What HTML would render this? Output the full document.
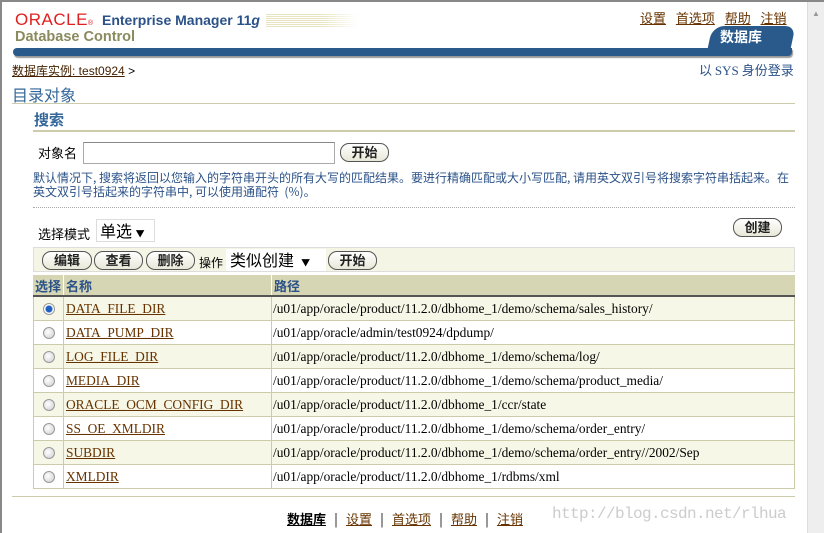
<!DOCTYPE html>
<html><head><meta charset="utf-8"><style>
*{margin:0;padding:0;box-sizing:border-box}
body{width:824px;height:533px;overflow:hidden;background:#fff;font-family:"Liberation Sans","Noto Sans CJK SC",sans-serif;font-size:12px;color:#000;position:relative}
.a{position:absolute;white-space:nowrap}
.cjk{font-family:"Noto Sans CJK SC",sans-serif}
.btn{position:absolute;height:19px;border:1px solid #555;border-radius:9px;background:linear-gradient(#fff,#e8e8d8);font-size:13px;font-weight:bold;text-align:center;line-height:16px;color:#222;font-family:"Noto Sans CJK SC",sans-serif}
a{color:#663300;text-decoration:underline}
.row{position:absolute;left:33px;width:762px;height:24px;border-bottom:1px solid #ccccaa}
.row div{position:absolute;top:0;height:23px;line-height:24px;font-family:"Liberation Serif",serif;font-size:13.4px}
.radio{position:absolute;left:10px;top:6px;width:12px;height:12px;border-radius:50%;border:1px solid #999;background:radial-gradient(circle at 40% 40%,#fff,#ccc)}
</style></head><body>
<div class="a" style="left:0;top:0;width:824px;height:2px;background:#888"></div>
<div class="a" style="left:0;top:0;width:2px;height:533px;background:#888"></div>
<div class="a" style="left:807px;top:2px;width:17px;height:531px;background:#eee;border-left:1px solid #ddd"></div>
<div class="a" style="left:812px;top:9px;color:#999;font-size:8px">▲</div>

<div class="a" style="left:15px;top:10px;color:#e02020;font-size:17px;letter-spacing:0.5px;font-family:'Liberation Sans',sans-serif">ORACLE<span style="font-size:7px">®</span></div>
<div class="a" style="left:266px;top:14px;width:92px;height:14px;background:repeating-linear-gradient(#e8e4c0 0 1px,#fff 1px 2px);-webkit-mask:linear-gradient(90deg,#000 60%,transparent)"></div>
<div class="a" style="left:102px;top:12px;color:#2b5288;font-size:14px;font-weight:bold">Enterprise Manager 11<i>g</i></div>
<div class="a" style="left:15px;top:29px;color:#8a8a5e;font-size:14.5px;font-weight:bold">Database Control</div>
<div class="a" style="left:13px;top:48px;width:779px;height:8px;background:#2a5a8c;border-radius:4px 0 4px 4px;box-shadow:1px 2px 1px #999"></div>
<div class="a" style="left:710px;top:26px;width:83px;height:23px;background:#2a5a8c;border-radius:12px 10px 0 0;transform:skewX(-12deg)"></div>
<div class="a cjk" style="left:720px;top:27px;color:#fff;font-size:14px;font-weight:bold">数据库</div>
<div class="a cjk" style="left:640px;top:8px;font-size:13px;word-spacing:2px"><a>设置</a>&nbsp; <a>首选项</a>&nbsp; <a>帮助</a>&nbsp; <a>注销</a></div>

<div class="a" style="left:12px;top:62px;font-size:12px"><a style="color:#442200"><span class="cjk">数据库实例</span>: test0924</a> &gt;</div>
<div class="a cjk" style="left:699px;top:60px;color:#2b5288;font-size:13px">以 <span style="font-family:'Liberation Serif',serif">SYS</span> 身份登录</div>
<div class="a cjk" style="left:12px;top:82px;color:#336699;font-size:16px">目录对象</div>
<div class="a" style="left:12px;top:103px;width:783px;height:1px;background:#ccccaa"></div>
<div class="a cjk" style="left:34px;top:109px;color:#336699;font-size:15px;font-weight:bold">搜索</div>
<div class="a" style="left:33px;top:130px;width:762px;height:2px;background:#ccccaa"></div>

<div class="a cjk" style="left:38px;top:143px;font-size:13px">对象名</div>
<div class="a" style="left:83px;top:142px;width:252px;height:22px;border:1px solid #aaa;border-top-color:#888"></div>
<div class="btn" style="left:340px;top:143px;width:49px">开始</div>
<div class="a cjk" style="left:33px;top:171px;color:#2b5288;font-size:12px;line-height:14px">默认情况下, 搜索将返回以您输入的字符串开头的所有大写的匹配结果。要进行精确匹配或大小写匹配, 请用英文双引号将搜索字符串括起来。在<br>英文双引号括起来的字符串中, 可以使用通配符 &nbsp;(%)。</div>
<div class="a" style="left:33px;top:207px;width:762px;border-top:1px dotted #aaa"></div>

<div class="a cjk" style="left:38px;top:224px;font-size:13px">选择模式</div>
<div class="a cjk" style="left:96px;top:219px;width:59px;height:23px;border:1px solid #ddd;font-size:16px;line-height:21px;padding-left:3px">单选 <span style="font-size:9px">▼</span></div>
<div class="btn" style="left:733px;top:218px;width:49px">创建</div>

<div class="a" style="left:33px;top:247px;width:762px;height:25px;background:#f5f5e6;border:1px solid #ddd"></div>
<div class="btn" style="left:42px;top:251px;width:50px">编辑</div>
<div class="btn" style="left:94px;top:251px;width:49px">查看</div>
<div class="btn" style="left:146px;top:251px;width:49px">删除</div>
<div class="a cjk" style="left:199px;top:254px;font-size:12px">操作</div>
<div class="a cjk" style="left:226px;top:249px;width:100px;height:22px;background:#fff;font-size:16px;line-height:21px;padding-left:4px">类似创建 &nbsp;<span style="font-size:9px">▼</span></div>
<div class="btn" style="left:328px;top:251px;width:49px">开始</div>

<div class="a" style="left:33px;top:275px;width:762px;height:22px;background:#d6d6b4;border-bottom:2px solid #555"></div>
<div class="a cjk" style="left:35px;top:276px;color:#2b5288;font-weight:bold;font-size:13px">选择</div>
<div class="a" style="left:63px;top:275px;width:1px;height:20px;background:#fff"></div>
<div class="a cjk" style="left:66px;top:276px;color:#2b5288;font-weight:bold;font-size:13px">名称</div>
<div class="a" style="left:271px;top:275px;width:1px;height:20px;background:#fff"></div>
<div class="a cjk" style="left:274px;top:276px;color:#2b5288;font-weight:bold;font-size:13px">路径</div>

<div class="row" style="top:297px;background:#f7f7e7"><span class="radio" style="background:radial-gradient(circle,#2060c0 0 3px,#fff 4px)"></span><div style="left:33px"><a>DATA_FILE_DIR</a></div><div style="left:240px">/u01/app/oracle/product/11.2.0/dbhome_1/demo/schema/sales_history/</div></div>
<div class="row" style="top:321px;background:#fff"><span class="radio"></span><div style="left:33px"><a>DATA_PUMP_DIR</a></div><div style="left:240px">/u01/app/oracle/admin/test0924/dpdump/</div></div>
<div class="row" style="top:345px;background:#f7f7e7"><span class="radio"></span><div style="left:33px"><a>LOG_FILE_DIR</a></div><div style="left:240px">/u01/app/oracle/product/11.2.0/dbhome_1/demo/schema/log/</div></div>
<div class="row" style="top:369px;background:#fff"><span class="radio"></span><div style="left:33px"><a>MEDIA_DIR</a></div><div style="left:240px">/u01/app/oracle/product/11.2.0/dbhome_1/demo/schema/product_media/</div></div>
<div class="row" style="top:393px;background:#f7f7e7"><span class="radio"></span><div style="left:33px"><a>ORACLE_OCM_CONFIG_DIR</a></div><div style="left:240px">/u01/app/oracle/product/11.2.0/dbhome_1/ccr/state</div></div>
<div class="row" style="top:417px;background:#fff"><span class="radio"></span><div style="left:33px"><a>SS_OE_XMLDIR</a></div><div style="left:240px">/u01/app/oracle/product/11.2.0/dbhome_1/demo/schema/order_entry/</div></div>
<div class="row" style="top:441px;background:#f7f7e7"><span class="radio"></span><div style="left:33px"><a>SUBDIR</a></div><div style="left:240px">/u01/app/oracle/product/11.2.0/dbhome_1/demo/schema/order_entry//2002/Sep</div></div>
<div class="row" style="top:465px;background:#fff"><span class="radio"></span><div style="left:33px"><a>XMLDIR</a></div><div style="left:240px">/u01/app/oracle/product/11.2.0/dbhome_1/rdbms/xml</div></div>
<div class="a" style="left:33px;top:297px;width:762px;height:192px;border:1px solid #ccccaa;border-top:none"></div>
<div class="a" style="left:63px;top:297px;width:1px;height:192px;background:#ccccaa"></div>
<div class="a" style="left:271px;top:297px;width:1px;height:192px;background:#ccccaa"></div>

<div class="a" style="left:12px;top:496px;width:783px;height:1px;background:#ccccaa"></div>
<div class="a cjk" style="left:287px;top:509px;font-size:13px;word-spacing:1.2px"><b style="text-decoration:underline">数据库</b> &nbsp;| &nbsp;<a>设置</a> &nbsp;| &nbsp;<a>首选项</a> &nbsp;| &nbsp;<a>帮助</a> &nbsp;| &nbsp;<a>注销</a></div>
<div class="a" style="left:552px;top:505px;color:#ccc;font-size:16px;font-family:'Liberation Mono',monospace;letter-spacing:-0.6px">http://blog.csdn.net/rlhua</div>
</body></html>
